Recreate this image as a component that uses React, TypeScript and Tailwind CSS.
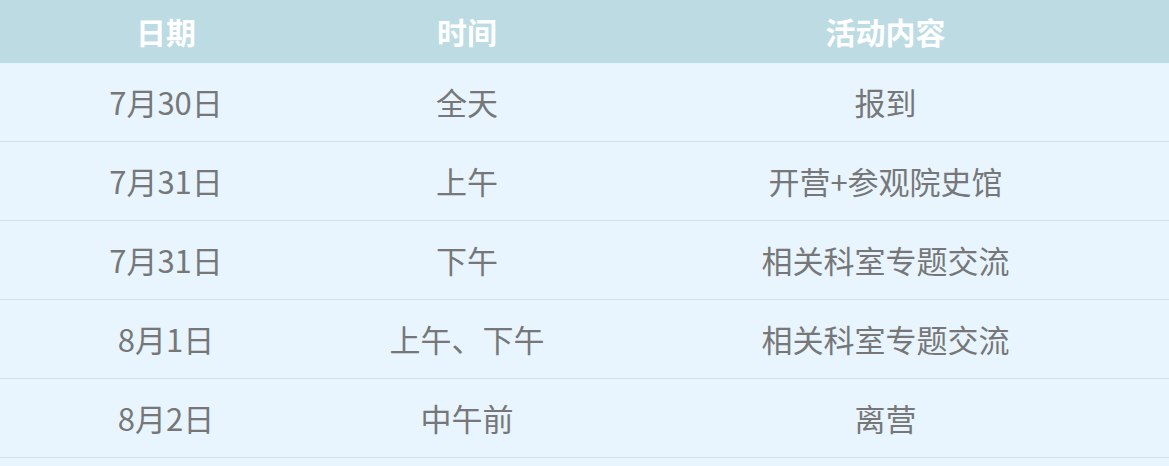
import React from 'react';

const rows = [
  { date: '7月30日', time: '全天', content: '报到' },
  { date: '7月31日', time: '上午', content: '开营+参观院史馆' },
  { date: '7月31日', time: '下午', content: '相关科室专题交流' },
  { date: '8月1日', time: '上午、下午', content: '相关科室专题交流' },
  { date: '8月2日', time: '中午前', content: '离营' },
];

export default function App() {
  return (
    <div
      className="w-[1169px] h-[466px] bg-[#e8f5fe] overflow-hidden"
      style={{ fontFamily: '"Noto Sans CJK SC", "Noto Sans", sans-serif' }}
    >
      <div className="grid grid-cols-[332px_270px_567px] h-[63px] bg-[#bddbe3] text-white font-bold text-[30px] items-center text-center">
        <div>日期</div>
        <div>时间</div>
        <div>活动内容</div>
      </div>
      {rows.map((r, i) => (
        <div
          key={i}
          className="grid grid-cols-[332px_270px_567px] h-[79px] border-b border-[#d9dee2] text-[#777777] text-[31px] items-center text-center"
        >
          <div>{r.date}</div>
          <div>{r.time}</div>
          <div>{r.content}</div>
        </div>
      ))}
    </div>
  );
}
